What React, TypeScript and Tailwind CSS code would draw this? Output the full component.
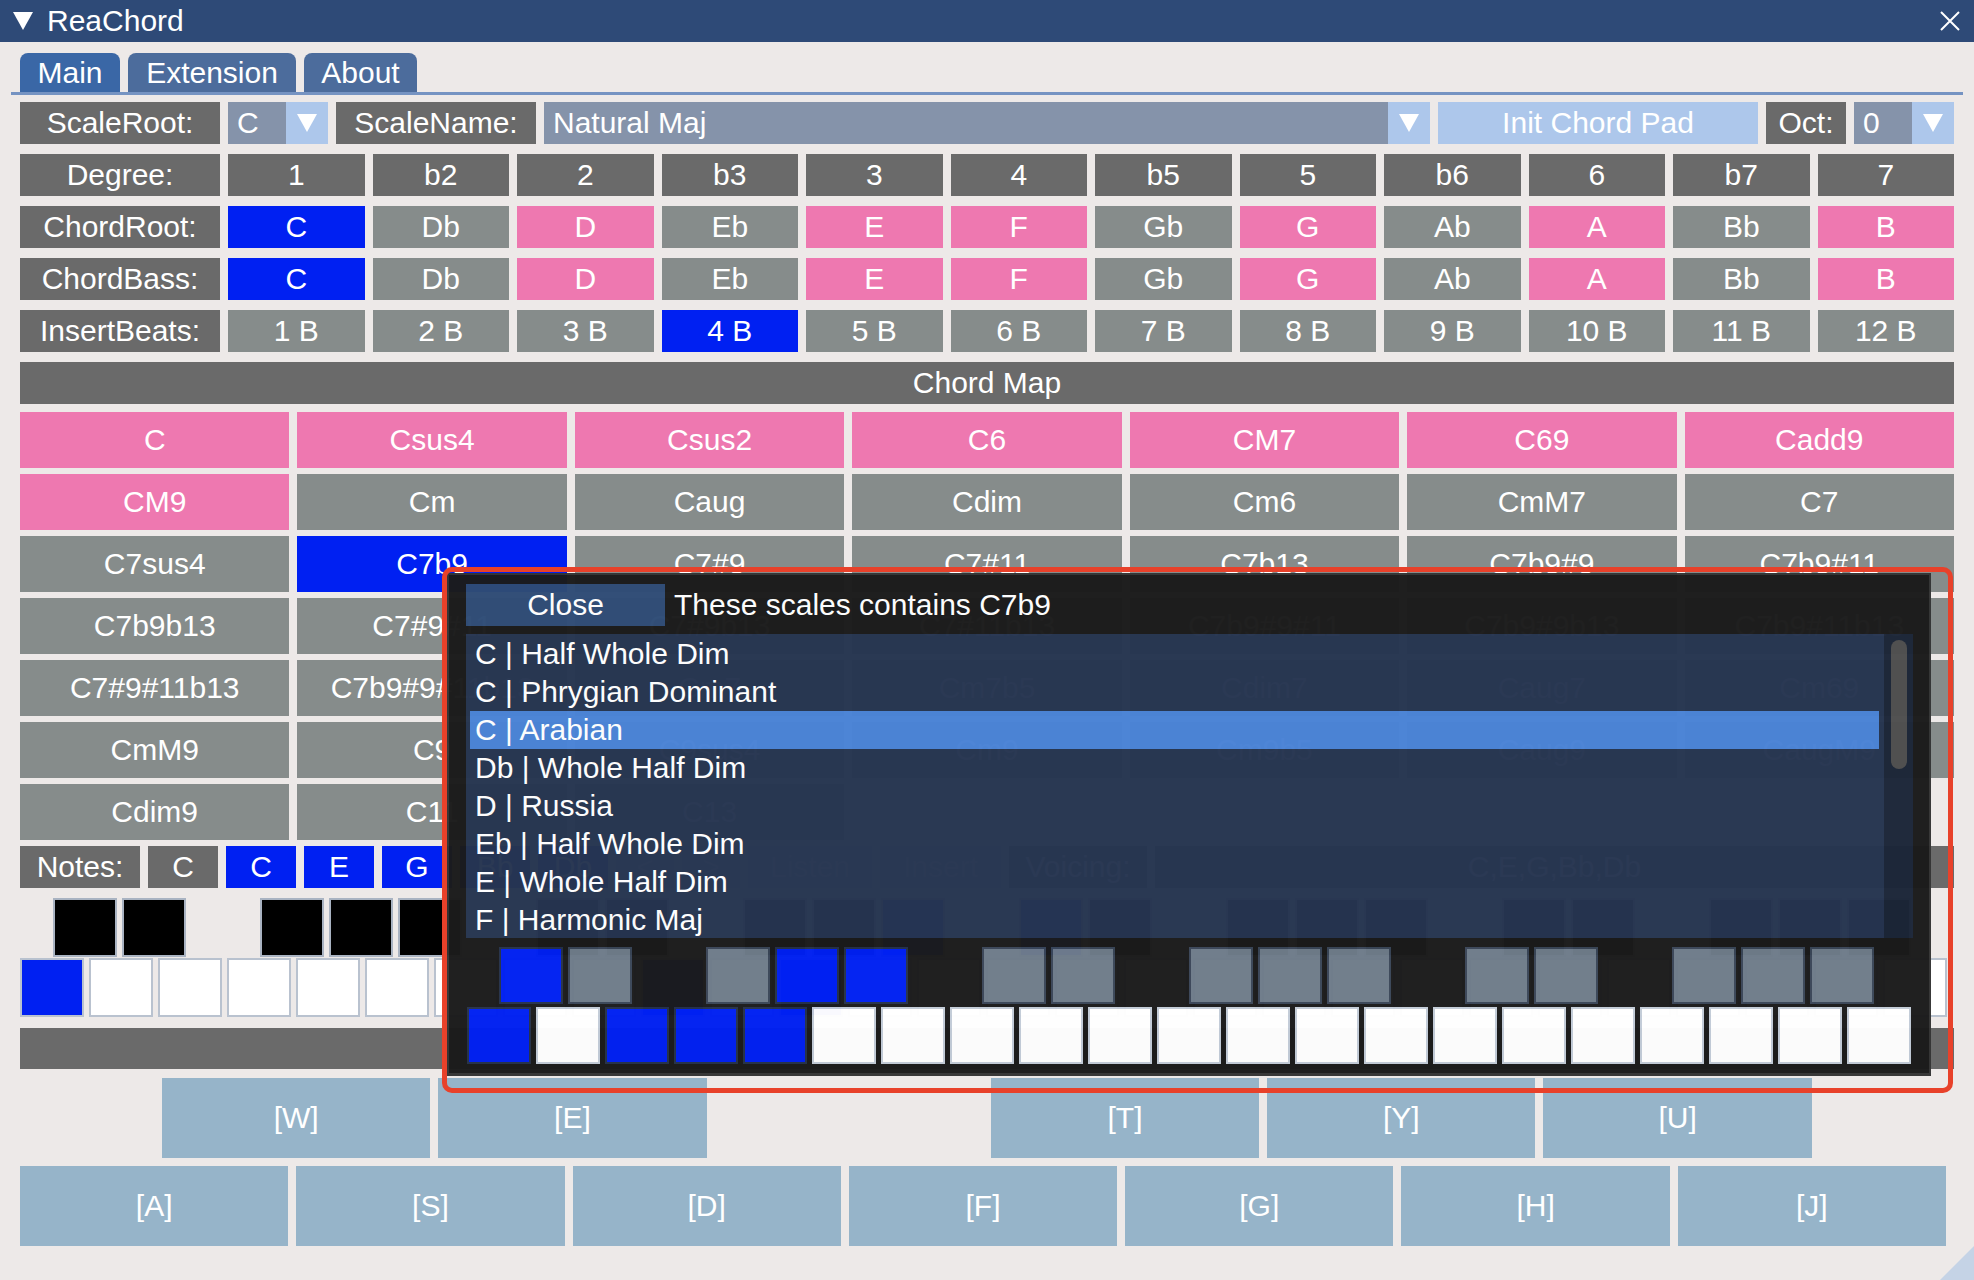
import React from "react";

const LABEL = "bg-[#6a6a6a]";
const GRAY = "bg-[#868c8b]";
const PINK = "bg-[#ee78b0]";
const BLUE = "bg-[#0020f2]";

function Cell({ cls, children, extra = "" }: { cls: string; children?: React.ReactNode; extra?: string }) {
  return <div className={`${cls} ${extra} flex items-center justify-center text-white whitespace-nowrap overflow-hidden`}>{children}</div>;
}

const degrees = ["1", "b2", "2", "b3", "3", "4", "b5", "5", "b6", "6", "b7", "7"];
const roots = ["C", "Db", "D", "Eb", "E", "F", "Gb", "G", "Ab", "A", "Bb", "B"];
const inScale = [0, 2, 4, 5, 7, 9, 11];

const chords: string[][] = [
  ["C", "Csus4", "Csus2", "C6", "CM7", "C69", "Cadd9"],
  ["CM9", "Cm", "Caug", "Cdim", "Cm6", "CmM7", "C7"],
  ["C7sus4", "C7b9", "C7#9", "C7#11", "C7b13", "C7b9#9", "C7b9#11"],
  ["C7b9b13", "C7#9#11", "C7#9b13", "C7#11b13", "C7b9#9#11", "C7b9#9b13", "C7b9#11b13"],
  ["C7#9#11b13", "C7b9#9#11b13", "Cm7", "Cm7b5", "Cdim7", "Caug7", "Cm69"],
  ["CmM9", "C9", "C9sus4", "Cm9", "Cm9b5", "Caug9", "CaugM9"],
  ["Cdim9", "C11", "C13"],
];

function rootColor(i: number) {
  if (i === 0) return BLUE;
  return inScale.includes(i) ? PINK : GRAY;
}

function chordColor(r: number, c: number) {
  if (r === 0) return PINK;
  if (r === 1 && c === 0) return PINK;
  if (r === 2 && c === 1) return BLUE;
  return GRAY;
}

function TitleBar() {
  return (
    <div className="flex items-center h-[42px] bg-[#2e4a77] pl-[13px] pr-[14px]">
      <svg width="20" height="18" viewBox="0 0 20 18">
        <polygon points="0,0 20,0 10,18" fill="#ffffff" />
      </svg>
      <span className="ml-[14px] text-white">ReaChord</span>
      <div className="flex-1" />
      <svg width="20" height="20" viewBox="0 0 20 20">
        <path d="M1 1 L19 19 M19 1 L1 19" stroke="#ffffff" strokeWidth="2" />
      </svg>
    </div>
  );
}

function Tabs() {
  return (
    <div className="mx-[11px] pt-[11px] px-[9px] flex items-end gap-2 border-b-[3px] border-[#7593c2]">
      <div className="w-[100px] h-[39px] rounded-t-[8px] bg-[#3a67a6] flex items-center justify-center">Main</div>
      <div className="w-[168px] h-[39px] rounded-t-[8px] bg-[#4c6c9c] flex items-center justify-center">Extension</div>
      <div className="w-[113px] h-[39px] rounded-t-[8px] bg-[#4c6c9c] flex items-center justify-center">About</div>
    </div>
  );
}

function Arrow() {
  return (
    <svg width="20" height="18" viewBox="0 0 20 18">
      <polygon points="0,0 20,0 10,18" fill="#ffffff" />
    </svg>
  );
}

function TopRow() {
  return (
    <div className="flex gap-2 h-[42px]">
      <Cell cls={LABEL} extra="w-[200px]">ScaleRoot:</Cell>
      <div className="w-[100px] flex bg-[#8593aa]">
        <div className="flex-1 flex items-center pl-[9px]">C</div>
        <div className="w-[42px] bg-[#adc7eb] flex items-center justify-center"><Arrow /></div>
      </div>
      <Cell cls={LABEL} extra="w-[200px]">ScaleName:</Cell>
      <div className="w-[886px] flex bg-[#8593aa]">
        <div className="flex-1 flex items-center pl-[9px]">Natural Maj</div>
        <div className="w-[42px] bg-[#adc7eb] flex items-center justify-center"><Arrow /></div>
      </div>
      <Cell cls="bg-[#adc7eb]" extra="w-[320px]">Init Chord Pad</Cell>
      <Cell cls={LABEL} extra="w-[80px]">Oct:</Cell>
      <div className="flex-1 flex bg-[#8593aa]">
        <div className="flex-1 flex items-center pl-[9px]">0</div>
        <div className="w-[42px] bg-[#adc7eb] flex items-center justify-center"><Arrow /></div>
      </div>
    </div>
  );
}

function DegreeGrid() {
  return (
    <div className="grid grid-cols-[200px_repeat(12,minmax(0,1fr))] gap-x-2 gap-y-[10px] auto-rows-[42px]">
      <Cell cls={LABEL}>Degree:</Cell>
      {degrees.map((d) => (
        <Cell key={"d" + d} cls={LABEL}>{d}</Cell>
      ))}
      <Cell cls={LABEL}>ChordRoot:</Cell>
      {roots.map((r, i) => (
        <Cell key={"r" + r} cls={rootColor(i)}>{r}</Cell>
      ))}
      <Cell cls={LABEL}>ChordBass:</Cell>
      {roots.map((r, i) => (
        <Cell key={"b" + r} cls={rootColor(i)}>{r}</Cell>
      ))}
      <Cell cls={LABEL}>InsertBeats:</Cell>
      {degrees.map((_, i) => (
        <Cell key={"ib" + i} cls={i === 3 ? BLUE : GRAY}>{`${i + 1} B`}</Cell>
      ))}
    </div>
  );
}

function ChordGrid() {
  return (
    <div className="mt-[8px] grid grid-cols-7 gap-x-2 gap-y-[6px] auto-rows-[56px]">
      {chords.map((row, r) =>
        row.map((c, ci) => (
          <Cell key={c} cls={chordColor(r, ci)}>{c}</Cell>
        ))
      )}
    </div>
  );
}

function NotesRow() {
  return (
    <div className="mt-[6px] flex gap-2 h-[42px]">
      <Cell cls={LABEL} extra="w-[120px]">Notes:</Cell>
      <Cell cls={LABEL} extra="w-[70px]">C</Cell>
      {["C", "E", "G", "Bb", "Db"].map((n) => (
        <Cell key={"n" + n} cls={BLUE} extra="w-[70px]">{n}</Cell>
      ))}
      <Cell cls="bg-[#adc7eb]" extra="w-[58px]">&lt;</Cell>
      <Cell cls="bg-[#adc7eb]" extra="w-[58px]">&gt;</Cell>
      <Cell cls="bg-[#adc7eb]" extra="w-[124px]">Listen</Cell>
      <Cell cls="bg-[#adc7eb]" extra="w-[121px]">Insert</Cell>
      <Cell cls={LABEL} extra="w-[138px]">Voicing:</Cell>
      <Cell cls={LABEL} extra="flex-1">C,E,G,Bb,Db</Cell>
    </div>
  );
}

function MainKeyboard() {
  const whites = Array.from({ length: 28 }, (_, i) => i);
  const blackBlue = (o: number, s: number) => (o === 1 && s === 5) || (o === 2 && s === 0);
  return (
    <div className="mt-[10px] flex flex-col gap-[1px]">
      <div className="flex gap-[5px] pl-[33px] h-[59px]">
        {whites.map((i) => {
          const o = Math.floor(i / 7);
          const s = i % 7;
          if (s === 2 || s === 6) return <div key={"mb" + i} className="w-[64px] shrink-0" />;
          return (
            <div
              key={"mb" + i}
              className={`w-[64px] shrink-0 border-2 border-[#a9b3c2] ${blackBlue(o, s) ? "bg-[#0020f2]" : "bg-black"}`}
            />
          );
        })}
      </div>
      <div className="flex gap-[5px] h-[59px]">
        {whites.map((i) => (
          <div
            key={"mw" + i}
            className={`w-[64px] shrink-0 border-2 border-[#b9c2cf] ${i === 0 || i === 9 || i === 11 ? "bg-[#0020f2]" : "bg-white"}`}
          />
        ))}
      </div>
    </div>
  );
}

function Pads() {
  const top = ["[W]", "[E]", "", "[T]", "[Y]", "[U]"];
  const bottom = ["[A]", "[S]", "[D]", "[F]", "[G]", "[H]", "[J]"];
  return (
    <div className="w-[1926px] flex flex-col">
      <div className="mt-[9px] flex gap-2 h-[80px]">
        <div className="w-[134px] shrink-0" />
        {top.map((p, i) =>
          p ? (
            <Cell key={"t" + i} cls="bg-[#96b4c9]" extra="w-[268.3px] shrink-0">{p}</Cell>
          ) : (
            <div key={"t" + i} className="w-[268.3px] shrink-0" />
          )
        )}
      </div>
      <div className="mt-[8px] grid grid-cols-7 gap-2 h-[80px]">
        {bottom.map((p) => (
          <Cell key={p} cls="bg-[#96b4c9]">{p}</Cell>
        ))}
      </div>
    </div>
  );
}

const scales = [
  "C | Half Whole Dim",
  "C | Phrygian Dominant",
  "C | Arabian",
  "Db | Whole Half Dim",
  "D | Russia",
  "Eb | Half Whole Dim",
  "E | Whole Half Dim",
  "F | Harmonic Maj",
];

function Popup() {
  const keys = Array.from({ length: 21 }, (_, i) => i);
  const blackCls = (i: number) => {
    const o = Math.floor(i / 7);
    const s = i % 7;
    if (o === 0 && (s === 0 || s === 4 || s === 5)) return "bg-[#0020f2] border-[#26324a]";
    return "bg-[#6f7c8a] border-[#3a4658]";
  };
  return (
    <div className="absolute left-[447px] top-[573px] w-[1484px] h-[503px] opacity-[0.975]">
      <div className="w-full h-full bg-[#1b1b1b] border-t-2 border-x-2 border-b-[3px] border-[#343434] pl-[17px] pt-[9px]">
        <div className="flex items-center h-[42px]">
          <div className="w-[199px] h-[42px] bg-[#2f4c76] flex items-center justify-center">Close</div>
          <span className="ml-[9px]">These scales contains C7b9</span>
        </div>
        <div className="mt-[8px] w-[1447px] h-[304px] bg-[#263550] flex">
          <div className="flex-1 pl-[4px] pt-[1px] pr-[5px] flex flex-col">
            {scales.map((s, i) => (
              <div
                key={s}
                className={`h-[38px] shrink-0 flex items-center pl-[5px] whitespace-nowrap ${i === 2 ? "bg-[#4a83d6]" : ""}`}
              >
                {s}
              </div>
            ))}
          </div>
          <div className="w-[29px] bg-[#1c2638] flex justify-center pt-[6px]">
            <div className="w-[16px] h-[129px] rounded-full bg-[#4f4f4f]" />
          </div>
        </div>
        <div className="mt-[9px] flex gap-[5px] pl-[33px] h-[57px]">
          {keys.map((i) => {
            const s = i % 7;
            if (s === 2 || s === 6) return <div key={"pb" + i} className="w-[64px] shrink-0" />;
            return <div key={"pb" + i} className={`w-[64px] shrink-0 border-2 ${blackCls(i)}`} />;
          })}
        </div>
        <div className="mt-[3px] flex gap-[5px] pl-[1px] h-[57px]">
          {keys.map((i) => (
            <div
              key={"pw" + i}
              className={`w-[64px] shrink-0 border-2 ${
                i === 0 || i === 2 || i === 3 || i === 4 ? "bg-[#0020f2] border-[#26324a]" : "bg-white border-[#c3ccd8]"
              }`}
            />
          ))}
        </div>
      </div>
    </div>
  );
}

export default function App() {
  return (
    <div className="relative w-[1974px] h-[1280px] overflow-hidden bg-[#ede9e8] font-['Liberation_Sans',Arial,sans-serif] text-[30px] leading-none text-white">
      <TitleBar />
      <Tabs />
      <div className="px-[20px] pt-[7px] flex flex-col">
        <div className="flex flex-col gap-[10px]">
          <TopRow />
          <DegreeGrid />
          <Cell cls={LABEL} extra="h-[42px]">Chord Map</Cell>
        </div>
        <ChordGrid />
        <NotesRow />
        <MainKeyboard />
        <div className={`${LABEL} mt-[11px] h-[41px]`} />
        <Pads />
      </div>
      <Popup />
      <div className="absolute left-[442px] top-[567px] w-[1511px] h-[526px] border-[5px] border-[#e8412a] rounded-[10px] pointer-events-none" />
      <svg className="absolute right-0 bottom-0" width="34" height="34" viewBox="0 0 34 34">
        <polygon points="34,0 34,34 0,34" fill="#c5d3e6" />
      </svg>
    </div>
  );
}
